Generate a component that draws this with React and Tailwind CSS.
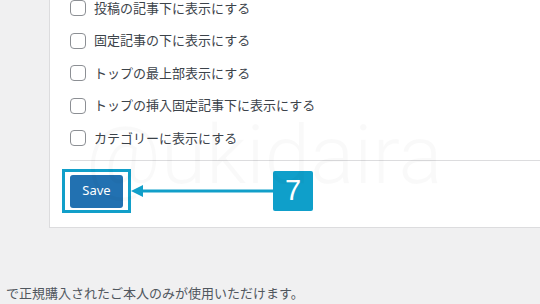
import React from 'react';

const options = [
  '投稿の記事下に表示にする',
  '固定記事の下に表示にする',
  'トップの最上部表示にする',
  'トップの挿入固定記事下に表示にする',
  'カテゴリーに表示にする',
];

const App = () => {
  return (
    <div
      className="relative h-[304px] w-[540px] overflow-hidden bg-[#f0f0f1]"
      style={{ fontFamily: '"Noto Sans", "Noto Sans CJK JP", sans-serif' }}
    >
      {/* Settings panel */}
      <div className="-mt-[8px] ml-[49px] border-b border-l border-[#dcdcde] bg-white pb-[16px] pl-[20px]">
        {options.map((label) => (
          <label key={label} className="flex h-[32.5px] items-center">
            <span className="h-[16px] w-[16px] shrink-0 rounded-[4px] border border-[#8c8f94] bg-white" />
            <span className="ml-[8px] text-[13px] leading-none text-[#3c434a]">{label}</span>
          </label>
        ))}

        <div className="mt-[5.5px] border-t border-[#dcdcde]" />

        {/* Save + annotation */}
        <div className="relative mt-[10px] flex h-[40px] items-center">
          <button
            type="button"
            className="h-[33px] w-[53px] rounded-[3px] bg-[#2271b1] text-[13px] text-white"
          >
            Save
          </button>
          <div className="pointer-events-none absolute -left-[8px] top-[-2px] h-[44px] w-[69px] border-[3px] border-[#119fc9]" />
          <svg className="ml-[8px]" width="142" height="12" viewBox="0 0 142 12">
            <polygon points="0,6 12,0 12,12" fill="#119fc9" />
            <line x1="10" y1="6" x2="142" y2="6" stroke="#119fc9" strokeWidth="3" />
          </svg>
          <div
            className="flex h-[40px] w-[40px] items-center justify-center rounded-[2px] bg-[#0f9fca] text-[29px] text-white"
            style={{ fontFamily: '"Liberation Sans", Arial, sans-serif' }}
          >
            7
          </div>
        </div>
      </div>

      <p className="mt-[55px] pl-[6px] text-[13px] leading-[20px] text-[#50575e]">
        で正規購入されたご本人のみが使用いただけます。
      </p>

      {/* Watermark */}
      <div
        className="pointer-events-none absolute left-[86px] top-[114px] text-[82px] font-light leading-none text-black/[0.025]"
        style={{ fontFamily: 'Roboto, sans-serif' }}
      >
        @ukidaira
      </div>
    </div>
  );
};

export default App;
